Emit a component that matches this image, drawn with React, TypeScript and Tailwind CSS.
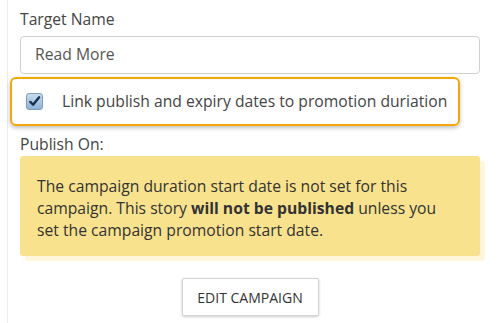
const App: React.FC = () => {
    return (
        <div className="w-[498px] h-[323px] bg-white overflow-hidden" style={{ fontFamily: '"Open Sans", sans-serif' }}>
            <div className="ml-[7px] h-full border-l border-[#ececec] pl-[12px] pr-[18px] pt-[8px] text-[#333]">
                <label className="block text-[15.7px] leading-[22px] text-[#444]">Target Name</label>
                <div className="mt-[6px] h-[38px] w-[460px] rounded-[4px] border border-[#cfcfcf] flex items-center px-[14px] text-[15.7px] text-[#555]">
                    Read More
                </div>

                <div className="-ml-[10px] mt-[3px] w-[450px] h-[49px] rounded-[6px] border-[2.5px] border-[#f5a70a] shadow-[0_2px_4px_rgba(0,0,0,0.25)] flex items-center pl-[14px]">
                    <span className="w-[17px] h-[17px] rounded-[3px] border border-[#7f9db9] bg-gradient-to-b from-[#c8dcef] to-[#8fb3d6] flex items-center justify-center">
                        <svg width="13" height="13" viewBox="0 0 14 14">
                            <path d="M2.5 7.5 L5.5 10.5 L12 2.5" fill="none" stroke="#16314d" strokeWidth="2.6" strokeLinecap="round" strokeLinejoin="round" />
                        </svg>
                    </span>
                    <span className="ml-[19px] text-[15.7px] text-[#444]">Link publish and expiry dates to promotion duriation</span>
                </div>

                <div className="mt-[7px] text-[15.7px] leading-[22px] text-[#444]">Publish On:</div>

                <div className="mt-[1px] w-[460px] h-[100px] rounded-[3px] bg-[#f8e28e] shadow-[5px_5px_0_#fff6dc] pl-[17px] pr-[32px] pt-[19px] text-[15.7px] leading-[22px] text-[#333]">
                    The campaign duration start date is not set for this campaign. This story <b>will not be published</b> unless you set the campaign promotion start date.
                </div>

                <div className="mt-[22px] flex justify-center">
                    <button className="w-[137px] h-[38px] rounded-[2px] border border-[#d4d4d4] bg-white shadow-[0_1px_3px_rgba(0,0,0,0.2)] text-[14px] text-[#333] uppercase">
                        Edit Campaign
                    </button>
                </div>
            </div>
        </div>
    );
};

export default App;
